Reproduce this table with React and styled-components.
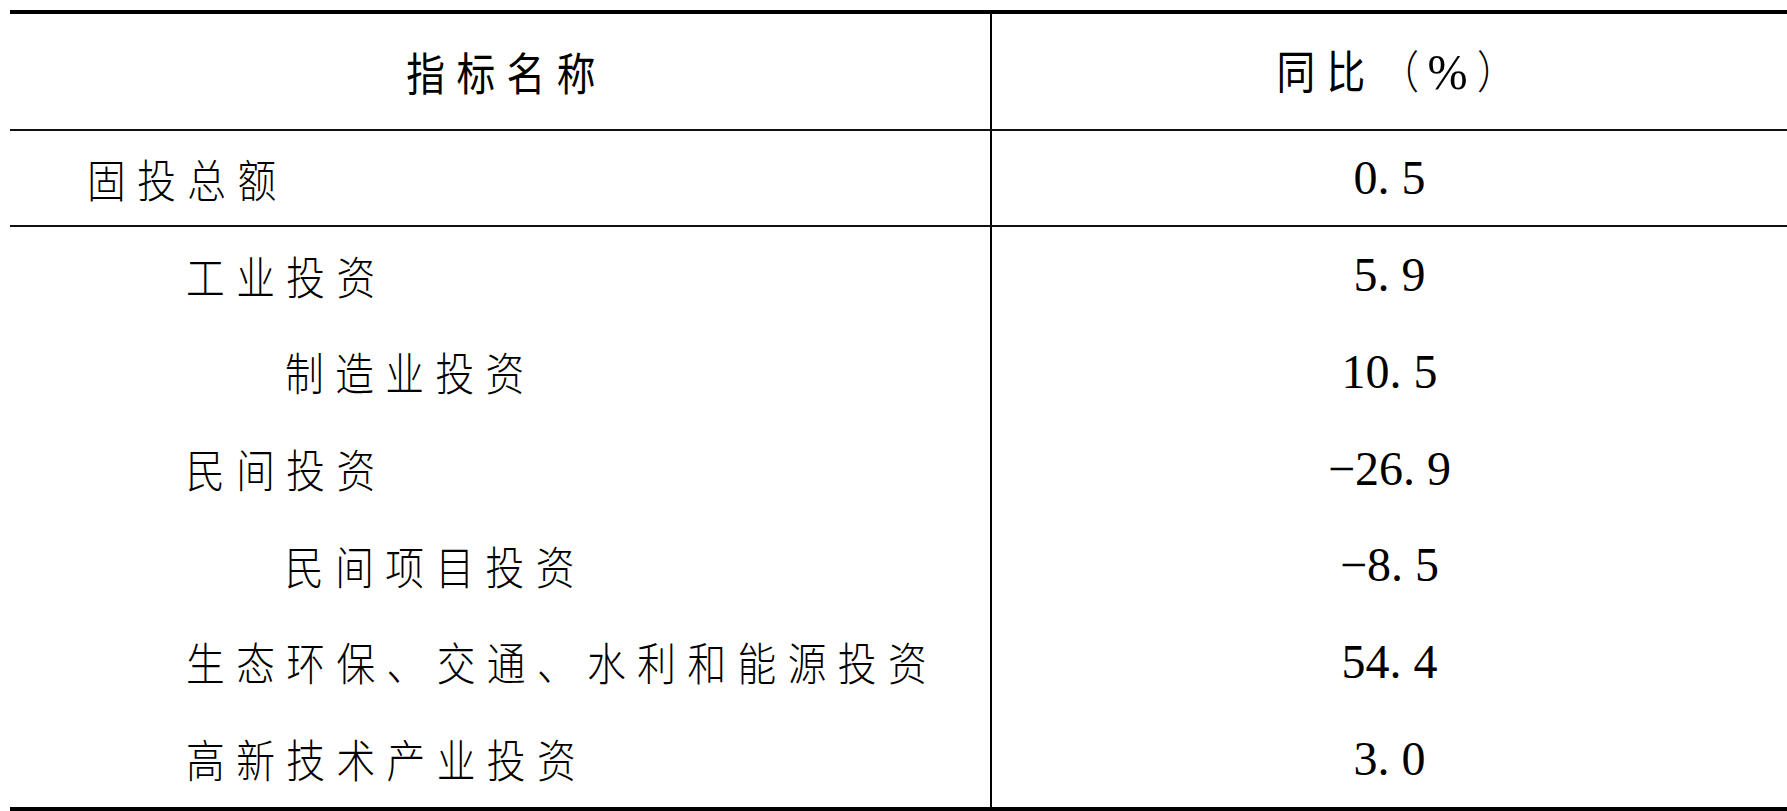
import React from "react";
import styled, { createGlobalStyle } from "styled-components";

const GlobalStyle = createGlobalStyle`
  html, body {
    margin: 0;
    padding: 0;
    background: #fff;
  }
  * {
    box-sizing: border-box;
  }
`;

const rows = [
  { name: "固投总额", value: "0.5", level: 0 },
  { name: "工业投资", value: "5.9", level: 1 },
  { name: "制造业投资", value: "10.5", level: 2 },
  { name: "民间投资", value: "−26.9", level: 1 },
  { name: "民间项目投资", value: "−8.5", level: 2 },
  { name: "生态环保、交通、水利和能源投资", value: "54.4", level: 1 },
  { name: "高新技术产业投资", value: "3.0", level: 1 },
];

const Page = styled.div`
  padding: 10px 0 0 10px;
  width: 1787px;
  height: 811px;
  overflow: hidden;
`;

const Table = styled.div`
  width: 1777px;
  border-top: 4px solid #000;
  border-bottom: 4px solid #000;
  color: #000;
`;

const Row = styled.div`
  display: grid;
  grid-template-columns: 982px 1fr;
  height: ${({ $height }) => ($height ? `${$height}px` : "auto")};
  border-bottom: ${({ $rule }) => ($rule ? "2px solid #111" : "none")};
`;

const Body = styled.div`
  display: grid;
  grid-template-rows: repeat(6, 1fr);
  height: 580px;
`;

const Cell = styled.div`
  display: flex;
  align-items: center;
  justify-content: ${({ $center }) => ($center ? "center" : "flex-start")};
  padding-left: ${({ $level }) => ($level == null ? 0 : 77 + $level * 99)}px;
  border-right: ${({ $divider }) => ($divider ? "2px solid #000" : "none")};
  line-height: 1;
  white-space: nowrap;
`;

const Squeeze = styled.span`
  display: inline-block;
  font-family: "Noto Sans CJK SC", sans-serif;
  font-size: 45px;
  font-weight: ${({ $heavy }) => ($heavy ? 400 : 300)};
  letter-spacing: 13.3px;
  transform: scaleX(0.86);
  transform-origin: ${({ $center }) => ($center ? "center" : "left")} center;
  margin-right: ${({ $center }) => ($center ? "-13px" : "0")};
`;

const Paren = styled.span`
  font-weight: 300;
  letter-spacing: 0;
  margin-left: 4px;
`;

const Percent = styled.span`
  font-family: "Liberation Serif", serif;
  font-size: 50px;
  font-weight: 400;
  letter-spacing: 0;
  display: inline-block;
  transform: scaleX(1.12);
  margin: 0 14px 0 12px;
`;

const Num = styled.span`
  font-family: "Liberation Serif", serif;
  font-size: 48px;
  color: #000;
`;

const Dot = styled.span`
  display: inline-block;
  width: 0.5em;
`;

const Value = ({ text }) => {
  const [whole, frac] = text.split(".");
  return (
    <Num>
      {whole}
      <Dot>.</Dot>
      {frac}
    </Num>
  );
};

export default function App() {
  const [first, ...rest] = rows;

  return (
    <Page>
      <GlobalStyle />
      <Table>
        <Row $height={117} $rule>
          <Cell $center $divider>
            <Squeeze $heavy $center>
              指标名称
            </Squeeze>
          </Cell>
          <Cell $center>
            <Squeeze $heavy $center>
              同比
              <Paren>
                （<Percent>%</Percent>）
              </Paren>
            </Squeeze>
          </Cell>
        </Row>
        <Row $height={96} $rule>
          <Cell $divider $level={first.level}>
            <Squeeze>{first.name}</Squeeze>
          </Cell>
          <Cell $center>
            <Value text={first.value} />
          </Cell>
        </Row>
        <Body>
          {rest.map((r) => (
            <Row key={r.name}>
              <Cell $divider $level={r.level}>
                <Squeeze>{r.name}</Squeeze>
              </Cell>
              <Cell $center>
                <Value text={r.value} />
              </Cell>
            </Row>
          ))}
        </Body>
      </Table>
    </Page>
  );
}
